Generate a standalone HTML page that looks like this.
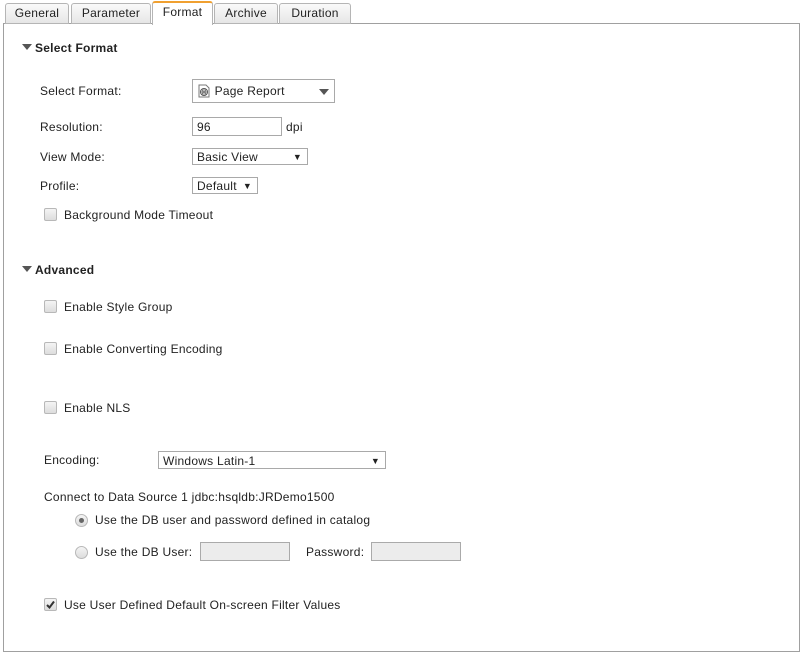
<!DOCTYPE html>
<html><head><style>
body{margin:0;width:801px;height:654px;background:#fff;font-family:"Liberation Sans",sans-serif;font-size:12px;color:#222;position:relative;overflow:hidden;letter-spacing:0.25px}
.a{position:absolute;white-space:nowrap}
.tab{position:absolute;top:3px;height:19px;border:1px solid #b5b5b5;border-radius:3px 3px 0 0;background:linear-gradient(#fafafa,#e6e6e6);text-align:center;line-height:19px;font-size:12px}
.cb{position:absolute;width:11px;height:11px;border:1px solid #b8b8b8;border-radius:2px;background:linear-gradient(#f4f4f4,#ddd)}
.rd{position:absolute;width:11px;height:11px;border:1px solid #b8b8b8;border-radius:50%;background:linear-gradient(#f4f4f4,#ddd)}
.sel{position:absolute;border:1px solid #a9a9a9;background:#fff;height:18px;line-height:18px;padding-left:4px;box-sizing:border-box}
.sel i{position:absolute;right:5px;top:0;font-style:normal;font-size:9px}
.tri{position:absolute;width:0;height:0;border-left:5px solid transparent;border-right:5px solid transparent;border-top:6px solid #555}
</style></head><body>
<div class="a" style="left:3px;top:23px;width:795px;height:627px;border:1px solid #a0a0a0"></div>
<div class="tab" style="left:5px;width:62px">General</div>
<div class="tab" style="left:71px;width:78px">Parameter</div>
<div class="tab" style="left:214px;width:62px">Archive</div>
<div class="tab" style="left:279px;width:70px">Duration</div>
<div class="tab" style="left:152px;width:59px;height:22px;background:#fff;border-top:2px solid #f0a030;border-bottom:none;top:1px">Format</div>

<div class="tri" style="left:22px;top:44px"></div>
<div class="a" style="left:35px;top:41px;font-weight:bold">Select Format</div>
<div class="a" style="left:40px;top:84px">Select Format:</div>
<div class="sel" style="left:192px;top:79px;width:143px;height:24px;line-height:22px;padding-left:4px">
<svg width="14" height="14" style="vertical-align:-3px" viewBox="0 0 14 14"><path d="M2 1h7l3 3v9H2z" fill="#fff" stroke="#777"/><circle cx="7" cy="8" r="3.5" fill="none" stroke="#555"/><path d="M3.5 8h7M7 4.5v7M5 5.5q2 2.5 0 5M9 5.5q-2 2.5 0 5" fill="none" stroke="#555" stroke-width=".7"/></svg> Page Report
<div class="tri" style="left:126px;top:9px;border-top-color:#555"></div></div>
<div class="a" style="left:40px;top:120px">Resolution:</div>
<div class="sel" style="left:192px;top:117px;width:90px;height:19px">96</div>
<div class="a" style="left:286px;top:120px">dpi</div>
<div class="a" style="left:40px;top:150px">View Mode:</div>
<div class="sel" style="left:192px;top:148px;width:116px;height:17px;line-height:16px">Basic View<i>&#9660;</i></div>
<div class="a" style="left:40px;top:179px">Profile:</div>
<div class="sel" style="left:192px;top:177px;width:66px;height:17px;line-height:16px">Default<i>&#9660;</i></div>
<div class="cb" style="left:44px;top:208px"></div>
<div class="a" style="left:64px;top:208px">Background Mode Timeout</div>

<div class="tri" style="left:22px;top:266px"></div>
<div class="a" style="left:35px;top:263px;font-weight:bold">Advanced</div>
<div class="cb" style="left:44px;top:300px"></div>
<div class="a" style="left:64px;top:300px">Enable Style Group</div>
<div class="cb" style="left:44px;top:342px"></div>
<div class="a" style="left:64px;top:342px">Enable Converting Encoding</div>
<div class="cb" style="left:44px;top:401px"></div>
<div class="a" style="left:64px;top:401px">Enable NLS</div>
<div class="a" style="left:44px;top:453px">Encoding:</div>
<div class="sel" style="left:158px;top:451px;width:228px;height:18px">Windows Latin-1<i>&#9660;</i></div>
<div class="a" style="left:44px;top:490px">Connect to Data Source 1 jdbc:hsqldb:JRDemo1500</div>
<div class="rd" style="left:75px;top:514px"><div style="position:absolute;left:3px;top:3px;width:5px;height:5px;border-radius:50%;background:#666"></div></div>
<div class="a" style="left:95px;top:513px">Use the DB user and password defined in catalog</div>
<div class="rd" style="left:75px;top:546px"></div>
<div class="a" style="left:95px;top:545px">Use the DB User:</div>
<div class="a" style="left:200px;top:542px;width:88px;height:17px;border:1px solid #aaa;background:#ececec"></div>
<div class="a" style="left:306px;top:545px">Password:</div>
<div class="a" style="left:371px;top:542px;width:88px;height:17px;border:1px solid #aaa;background:#ececec"></div>
<div class="cb" style="left:44px;top:598px"><svg width="11" height="11" style="position:absolute;left:0;top:0" viewBox="0 0 11 11"><path d="M2 6l2.5 2.5L9 2.5" fill="none" stroke="#333" stroke-width="2"/></svg></div>
<div class="a" style="left:64px;top:598px">Use User Defined Default On-screen Filter Values</div>
</body></html>
